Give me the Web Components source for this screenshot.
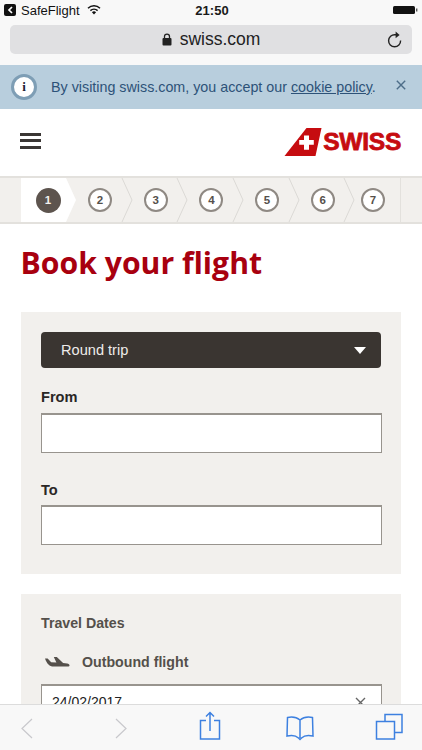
<!DOCTYPE html>
<html lang="en"><head><meta charset="utf-8"><title>Swiss</title>
<style>
html,body{margin:0;padding:0;background:#fff}
body{width:422px;height:750px;overflow:hidden;position:relative;font-family:"Liberation Sans",Arial,sans-serif}
</style></head><body>
<ios-chrome></ios-chrome>
<cookie-banner>By visiting swiss.com, you accept our <a>cookie policy</a>.</cookie-banner>
<site-header></site-header>
<step-bar></step-bar>
<page-title>Book your flight</page-title>
<form-panel style="height:262px;margin-bottom:20px">
  <trip-select>Round trip</trip-select>
  <field-box label="From"></field-box>
  <field-box label="To" style="margin-top:29px;--label-gap:6px"></field-box>
</form-panel>
<form-panel>
  <dates-block></dates-block>
</form-panel>
<safari-bar></safari-bar>
<script>
function def(name,html){
  customElements.define(name,class extends HTMLElement{
    connectedCallback(){
      if(this.shadowRoot)return;
      const r=this.attachShadow({mode:'open'});
      r.innerHTML=typeof html==='function'?html(this):html;
    }
  });
}
def('ios-chrome',`<style>
:host{display:flex;flex-direction:column;height:65px;background:#f8f8f8;box-sizing:border-box;color:#111}
.status{height:20px;display:grid;grid-template-columns:1fr auto 1fr;align-items:center;padding:0 4px 0 4px;font-size:13px;box-sizing:border-box}
.l{display:flex;align-items:center;gap:3px}
.back{width:12px;height:12px;background:#111;border-radius:2px;display:flex;align-items:center;justify-content:center;margin-right:2px}
.wifi{margin-left:4px}
.t{font-size:13px;position:relative;left:1px;letter-spacing:.1px;color:#1a1a1a;font-weight:700}
.r{display:flex;justify-content:flex-end;align-items:center}
.url{margin:5px 10px 0;height:29px;background:#e0e0e2;border-radius:5px;display:flex;align-items:center;justify-content:center;position:relative;font-size:17.5px;color:#222}
.url span{margin-left:8px}
.url .re{position:absolute;right:9px;top:6px}
</style>
<div class="status"><div class="l"><span class="back"><svg width="7" height="8" viewBox="0 0 7 8"><path d="M5 1 2 4l3 3" fill="none" stroke="#fff" stroke-width="1.7"/></svg></span><span>SafeFlight</span>
<svg class="wifi" width="14" height="10" viewBox="0 0 14 10"><path d="M7 9.600 4.900 7.200a3 3 0 0 1 4.200 0z" fill="#111"/><path d="M3.400 5.600a5.200 5.200 0 0 1 7.200 0M1 3.200a8.600 8.600 0 0 1 12 0" fill="none" stroke="#111" stroke-width="1.5"/></svg></div>
<div class="t">21:50</div>
<div class="r"><svg width="25" height="10" viewBox="0 0 25 10"><rect x="0" y="1" width="22" height="8" rx="1.5" fill="#111"/><rect x="23" y="3.5" width="1.4" height="3" fill="#555"/></svg></div></div>
<div class="url"><svg width="10" height="13" viewBox="0 0 10 13"><rect x=".5" y="5" width="9" height="7.5" rx="1" fill="#222"/><path d="M2.500 5.500V3.600a2.500 2.500 0 0 1 5 0v1.900" fill="none" stroke="#222" stroke-width="1.3"/></svg><span>swiss.com</span>
<svg class="re" width="16" height="17" viewBox="0 0 16 17"><path d="M13.600 9.600A6 6 0 1 1 8 3.800h2" fill="none" stroke="#222" stroke-width="1.4"/><path d="M8.600.4 12.600 3.900 8.600 7.200z" fill="#222"/></svg></div>`);
def('cookie-banner',`<style>
:host{display:flex;align-items:center;height:44px;background:#b8cedd;color:#2d5278;font-size:14.3px;box-sizing:border-box;padding:0 0 0 11px}
.i{width:26px;height:26px;box-sizing:border-box;border-radius:50%;background:#fff;border:3px solid #7e9eb5;display:flex;align-items:center;justify-content:center;font:700 13px "Liberation Serif",serif;color:#223;flex:none;margin-right:14px}
.txt{white-space:nowrap}
::slotted(a){color:#2d5278;text-decoration:underline}
.x{margin-left:auto;margin-right:16px;margin-top:-4px}
</style><span class="i">i</span><span class="txt"><slot></slot></span>
<svg class="x" width="10" height="10" viewBox="0 0 10 10"><path d="M.8.8l8.400 8.400M9.200.8.8 9.200" stroke="#4d6d88" stroke-width="1.4" fill="none"/></svg>`);
def('site-header',`<style>
:host{display:flex;align-items:center;justify-content:space-between;height:67px;background:#fff;padding:0 20px 0 20px;box-sizing:border-box}
.m{display:flex;flex-direction:column;gap:3.5px;width:21px;margin-top:-4px}
.m i{display:block;height:3px;background:#3a3634}
.logo{display:flex;align-items:center;margin-top:-1px;gap:1px;margin-right:1px}
.w{font:700 24.6px/28px "Liberation Sans",Arial,sans-serif;color:#c60c10;-webkit-text-stroke:.8px #c60c10;letter-spacing:-.3px}
</style><div class="m"><i></i><i></i><i></i></div>
<div class="logo"><svg width="38" height="28" viewBox="0 0 38 28"><path d="M22.500 0H37.500L31.500 28H.5z" fill="#c60c10"/><path d="M20 7.500h5v4.500h4.800v4.800h-4.800v5h-5v-5h-4.800v-4.800h4.800z" fill="#fff"/></svg><span class="w">SWISS</span></div>`);
def('step-bar',`<style>
:host{display:flex;height:48px;background:#f2f0ed;border-top:2px solid #e3e1dd;border-bottom:2px solid #e3e1dd;box-sizing:border-box;padding:0 21px;position:relative}
.s{width:55.7px;flex:none;position:relative;display:flex;align-items:center;padding-left:22px;box-sizing:border-box}
.c{width:24px;height:24px;box-sizing:border-box;border:2px solid #8f8983;border-radius:50%;background:#fff;color:#55504b;font-size:11.5px;font-weight:700;display:flex;align-items:center;justify-content:center;position:relative;z-index:2}
.a{width:25px;height:25px;background:#5d544e;border:0;color:#f3f1ee}
svg{position:absolute;top:0;left:100%;z-index:1;overflow:visible}
.edge{position:absolute;left:21px;right:21px;top:0;bottom:0;border-left:1px solid #e3e1dd;border-right:1px solid #e3e1dd;pointer-events:none}
.first-bg{position:absolute;top:0;bottom:0;left:21px}
</style>
<svg class="first-bg" width="56" height="44" viewBox="0 0 56 44"><path d="M0 0H45L55 22 45 44H0z" fill="#fff"/></svg>
<div class="edge"></div>
<div class="s" style="width:45px;padding-left:14.500px"><span class="c a">1</span></div>
${[2,3,4,5,6].map(n=>`<div class="s"><svg width="12" height="44" viewBox="0 0 12 44"><path d="M0 0 10 22 0 44" fill="none" stroke="#dcdad6" stroke-width="1"/></svg><span class="c">${n}</span></div>`).join('')}
<div class="s" style="padding-left:16.500px"><span class="c">7</span></div>`);
def('page-title',`<style>
:host{display:block;padding:20px 21px 0 20.500px;height:88px;box-sizing:border-box;color:#a8000f;font:700 30.200px/38px "Open Sans","Noto Sans",sans-serif;white-space:nowrap}
</style><slot></slot>`);
def('form-panel',`<style>
:host{display:block;margin:0 21px;padding:20px;background:#f2f0ed;box-sizing:border-box}
</style><slot></slot>`);
def('trip-select',`<style>
:host{display:flex;align-items:center;justify-content:space-between;height:36px;background:#3a3531;border-radius:4px;color:#eeecea;font-size:14.600px;padding:0 15px 0 20px;margin-bottom:21px;box-sizing:border-box}
i{width:0;height:0;border-left:6px solid transparent;border-right:6px solid transparent;border-top:7px solid #fff}
</style><span><slot></slot></span><i></i>`);
def('field-box',h=>`<style>
:host{display:block}
.l{font-size:14.600px;font-weight:700;color:#2a2725;line-height:17px;margin-bottom:var(--label-gap,7px)}
.b{width:341px;height:40px;background:#fff;border:1px solid #98948e;border-top-width:2px;box-sizing:border-box}
</style><div class="l">${h.getAttribute('label')}</div><div class="b"></div>`);
def('dates-block',`<style>
:host{display:block;color:#55504b;font-weight:700;font-size:14.200px;padding-top:1px}
.td{line-height:17px}
.ob{display:flex;align-items:center;gap:12px;margin-top:22px;line-height:17px;padding-left:3px}
.b{width:341px;height:40px;margin-top:13px;background:#fff;border:1px solid #98948e;border-top-width:2px;box-sizing:border-box;display:flex;justify-content:space-between;align-items:flex-start;padding:8px 15px 0 10px;font-weight:400;color:#222;font-size:14px}
</style><div class="td">Travel Dates</div>
<div class="ob"><svg width="26" height="14" viewBox="0 0 26 14"><path d="M1 2.500h2.600l3.600 3.700 5.200.3L9.800 1h3l6.300 6 4 .6c1.600.3 2.400 1 2.400 2 0 .7-.6 1-1.700 1H9.500C5.500 10.600 3 8 1 2.500z" fill="#55504b"/></svg><span>Outbound flight</span></div>
<div class="b"><span>24/02/2017</span><svg width="11" height="11" viewBox="0 0 11 11" style="margin-top:3px"><path d="M1 1l9 9M10 1l-9 9" stroke="#666" stroke-width="1.4"/></svg></div>`);
def('safari-bar',`<style>
:host{position:absolute;left:0;right:0;bottom:0;height:46px;background:#f8f8f8;border-top:1px solid #dcdcdc;box-sizing:border-box;display:flex;align-items:flex-start;padding-left:20px}
svg{fill:none;stroke-width:1.5;stroke:#3d80e0;flex:none;display:block}
.g{stroke:#c8c8cc;stroke-width:1.2}
</style>
<svg class="g" style="margin-top:12px" width="14" height="22" viewBox="0 0 14 22"><path d="M12 2 2 11.500 12 21"/></svg>
<svg class="g" style="margin:12px 0 0 80px" width="14" height="22" viewBox="0 0 14 22"><path d="M2 2 12 11.500 2 21"/></svg>
<svg style="margin:6px 0 0 71px" width="22" height="30" viewBox="0 0 22 30"><path d="M7 9.500H1.500v18.500h19V9.500H15M11 20V1.500M7 5.500 11 1.500 15 5.500"/></svg>
<svg style="margin:10px 0 0 65px" width="28" height="26" viewBox="0 0 28 26"><path d="M14 5C11 2.500 6 1.500 1.500 2.500L1 21c4-1 9-.5 11.500 2l1.500 1.500L15.500 23c2.500-2.500 7.500-3 11.500-2l-.5-18.500C22 1.500 17 2.500 14 5v18"/></svg>
<svg style="margin:8px 0 0 61px" width="28" height="27" viewBox="0 0 28 27"><path d="M1.500 8.500h18v17.500h-18zM10 8.500V1.500h17v18h-7.500"/></svg>`);
</script>
</body></html>
